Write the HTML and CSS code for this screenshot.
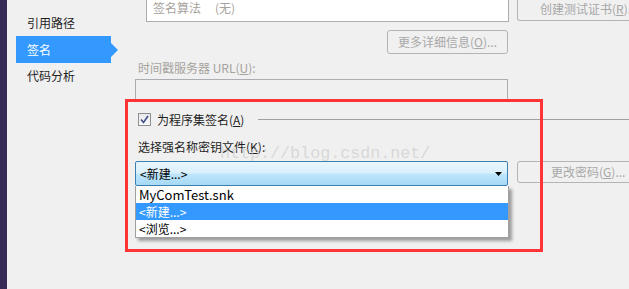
FILE: index.html
```html
<!DOCTYPE html>
<html lang="zh">
<head>
<meta charset="utf-8">
<link rel="stylesheet" href="styles.css">
</head>
<body>
<div class="app">
  <div class="edge"></div>
  <nav class="side">
    <div class="nav-item">引用路径</div>
    <div class="nav-item active">签名</div>
    <div class="nav-item">代码分析</div>
  </nav>
  <main class="main">
    <div class="row-top">
      <div class="algo-box"><span class="dim">签名算法</span><span class="dim algo-val">(无)</span></div>
      <div class="btn btn-top">创建测试证书(<u>R</u>)...</div>
    </div>
    <div class="btn btn-more">更多详细信息(<u>O</u>)...</div>
    <div class="label dim lbl-url">时间戳服务器 URL(<u>U</u>):</div>
    <div class="url-box"></div>
    <div class="group-head">
      <span class="checkbox">
        <svg width="9" height="9" viewBox="0 0 9 9"><path d="M1 4.5 L3.5 7.5 L8 1" fill="none" stroke="#3f4f8f" stroke-width="1.6"/></svg>
      </span>
      <span class="label">为程序集签名(<u>A</u>)</span>
      <span class="sep"></span>
    </div>
    <div class="label lbl-key">选择强名称密钥文件(<u>K</u>):</div>
    <div class="row-combo">
      <div class="combo-wrap">
        <div class="combo"><span>&lt;新建...&gt;</span>
          <svg class="arrow" width="7" height="4" viewBox="0 0 7 4"><path d="M0 0 H7 L3.5 4 Z" fill="#000"/></svg>
        </div>
        <ul class="dropdown">
          <li>MyComTest.snk</li>
          <li class="sel">&lt;新建...&gt;</li>
          <li>&lt;浏览...&gt;</li>
        </ul>
      </div>
      <div class="btn btn-pwd">更改密码(<u>G</u>)...</div>
    </div>
    <div class="watermark">http://blog.csdn.net/</div>
  </main>
  <div class="highlight"></div>
</div>
</body>
</html>
```

FILE: styles.css
```css
* { box-sizing: border-box; }
html, body { margin: 0; padding: 0; }
body {
  width: 629px;
  height: 289px;
  overflow: hidden;
  background: #f0f0f0;
  font-family: "Noto Sans CJK SC", "Noto Sans", sans-serif;
  font-size: 12px;
  color: #1e1e1e;
}
u { text-decoration: underline; text-underline-offset: 1px; }
.app {
  position: relative;
  display: flex;
  height: 289px;
}
.edge {
  width: 7px;
  background: #372a56;
  flex: none;
}
.side {
  width: 128px;
  flex: none;
  padding-top: 10px;
}
.nav-item {
  position: relative;
  height: 26px;
  line-height: 26px;
  margin-left: 9px;
  width: 95px;
  padding-left: 11px;
  font-size: 12px;
  color: #1e1e1e;
}
.nav-item.active {
  background: #3399ff;
  color: #fff;
  height: 27px;
  line-height: 27px;
}
.nav-item.active::after {
  content: "";
  position: absolute;
  right: -7px;
  top: 7px;
  border-left: 7px solid #3399ff;
  border-top: 7px solid transparent;
  border-bottom: 7px solid transparent;
}
.main {
  position: relative;
  flex: 1;
  width: 494px;
  min-width: 0;
}
.dim { color: #a6a29c; }
.row-top {
  display: flex;
  gap: 8px;
  margin-left: 11px;
  height: 22px;
}
.row-top > * { flex: none; }
.algo-box {
  width: 363px;
  height: 22px;
  border: 1px solid #abadb3;
  border-top: none;
  background: #fff;
  padding-left: 6px;
  line-height: 16px;
}
.algo-val { margin-left: 14px; }
.btn {
  border: 1px solid #b4b4b4;
  border-radius: 3px;
  background: #f0f0f0;
  color: #a8a8a8;
  text-align: center;
  white-space: nowrap;
}
.btn-top {
  width: 130px;
  height: 21px;
  border-top: none;
  border-top-left-radius: 0;
  border-top-right-radius: 0;
  line-height: 17px;
  padding-left: 22px;
  text-align: left;
}
.btn-more {
  margin-top: 8px;
  margin-left: 252px;
  width: 121px;
  height: 24px;
  line-height: 22px;
}
.label { white-space: nowrap; }
.lbl-url {
  margin-top: 5px;
  margin-left: 3px;
  height: 20px;
  line-height: 18px;
}
.url-box {
  width: 373px;
  height: 21px;
  border: 1px solid #abadb3;
  border-bottom: none;
  background: #f0f0f0;
}
.group-head {
  display: flex;
  align-items: center;
  margin-top: 13px;
  margin-left: 3px;
  height: 13px;
}
.checkbox {
  width: 13px;
  height: 13px;
  border: 1px solid #8e8f8f;
  background: linear-gradient(#e8e8e8, #fafafa);
  display: flex;
  align-items: center;
  justify-content: center;
  margin-right: 6px;
  flex: none;
}
.sep {
  flex: 1;
  height: 1px;
  background: #a0a0a0;
  margin-left: 14px;
  margin-right: -20px;
}
.lbl-key {
  margin-top: 12px;
  margin-left: 3px;
  height: 18px;
  line-height: 18px;
}
.row-combo {
  display: flex;
  gap: 9px;
  margin-top: 5px;
}
.row-combo > * { flex: none; }
.combo-wrap {
  position: relative;
  width: 373px;
}
.combo {
  height: 25px;
  border: 1px solid #3c7fb1;
  border-radius: 2px;
  background: linear-gradient(#eaf6fd 0%, #d9f0fc 48%, #bee6fd 52%, #a7d9f5 100%);
  display: flex;
  align-items: center;
  padding-left: 4px;
  color: #000;
}
.combo .arrow {
  margin-left: auto;
  margin-right: 5px;
}
.dropdown {
  position: absolute;
  left: 0;
  top: 25px;
  width: 374px;
  margin: 0;
  padding: 0;
  list-style: none;
  background: #fff;
  border: 1px solid #a0a0a0;
  border-top: none;
  box-shadow: 3px 3px 3px rgba(0,0,0,0.35);
  color: #000;
}
.dropdown li {
  height: 17px;
  line-height: 17px;
  padding-left: 3px;
}
.dropdown li:first-child { font-size: 13px; }
.dropdown li.sel {
  background: #3399ff;
  color: #fff;
}
.btn-pwd {
  width: 130px;
  height: 22px;
  line-height: 20px;
  text-align: left;
  padding-left: 33px;
}
.watermark {
  position: absolute;
  left: 85px;
  top: 144px;
  font-family: "Liberation Mono", monospace;
  font-size: 16.7px;
  color: rgba(200,200,200,0.6);
  pointer-events: none;
}
.highlight {
  position: absolute;
  left: 125px;
  top: 99px;
  width: 418px;
  height: 153px;
  border: 3px solid #ff3535;
  pointer-events: none;
}
```
